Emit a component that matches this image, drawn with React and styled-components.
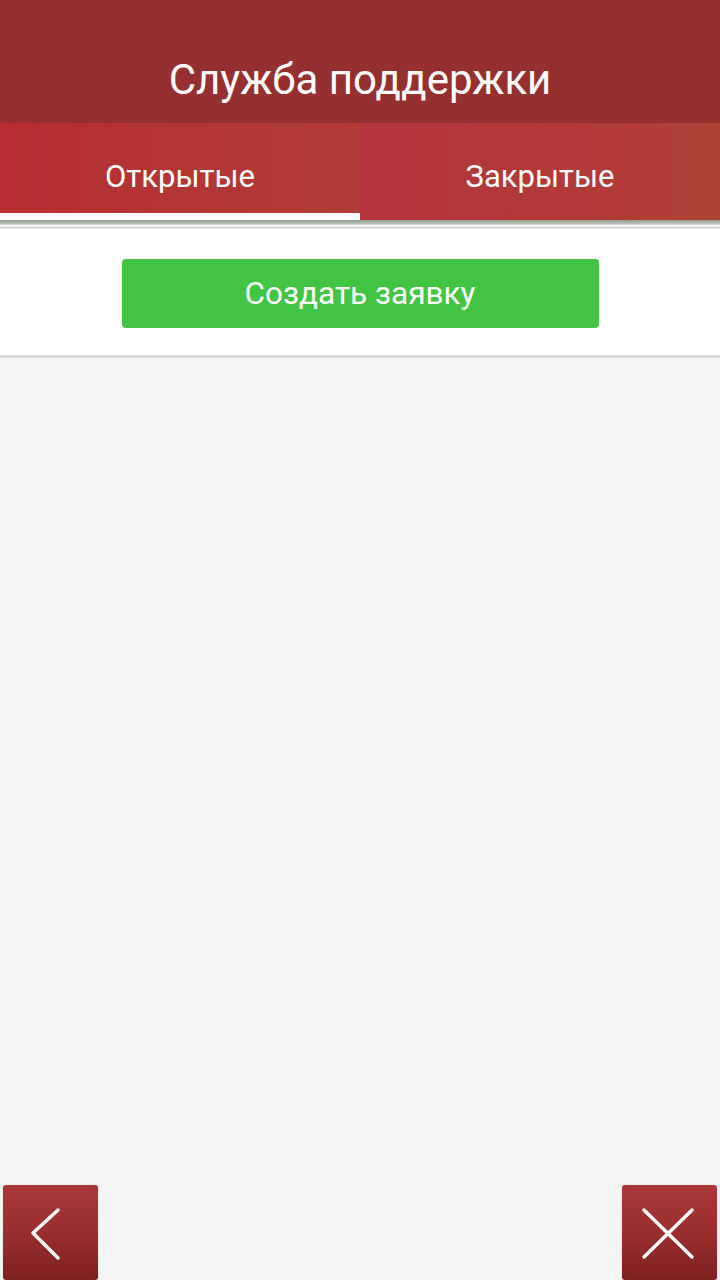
import React from 'react';
import styled, { createGlobalStyle } from 'styled-components';

const GlobalStyle = createGlobalStyle`
  html, body {
    margin: 0;
    padding: 0;
    background: #f4f4f4;
    font-family: Roboto, "Noto Sans", sans-serif;
  }
`;

const Page = styled.div`
  display: flex;
  flex-direction: column;
  min-height: 1280px;
  background: #f4f4f4;
`;

const Header = styled.header`
  height: 123px;
  background: #963030;
  color: #fff;
  display: flex;
  align-items: flex-start;
  justify-content: center;
  font-size: 42px;
  line-height: 1;
  padding-top: 59px;
  box-sizing: border-box;
`;

const Tabs = styled.nav`
  display: flex;
  height: 97px;
`;

const Tab = styled.div`
  flex: 1;
  display: flex;
  align-items: center;
  justify-content: center;
  color: #fff;
  font-size: 31px;
  box-sizing: border-box;
  padding-top: 16px;
  background: ${p => (p.$active
    ? 'linear-gradient(90deg, #b82d31 0%, #b23735 60%, #b03c36 100%)'
    : 'linear-gradient(90deg, #b3363a 0%, #b23a37 70%, #ae4236 100%)')};
  border-bottom: 7px solid ${p => (p.$active ? '#ffffff' : 'transparent')};
`;

const TabShadow = styled.div`
  height: 10px;
  background: linear-gradient(#8f9c8e 0%, #b9c1b8 35%, #f2f2f2 55%, #f2f2f2 65%, #cfcfcf 72%, #d6d6d6 80%, #ffffff 92%);
`;

const Card = styled.section`
  background: #fff;
  height: 128px;
  display: flex;
  align-items: flex-start;
  justify-content: center;
  padding-top: 29px;
  box-sizing: border-box;
  border-bottom: 3px solid #d9d9d9;
`;

const CreateButton = styled.button`
  width: 477px;
  height: 69px;
  border: none;
  border-radius: 4px;
  background: #42c544;
  color: #fff;
  font-family: Roboto, "Noto Sans", sans-serif;
  font-size: 31.5px;
  cursor: pointer;
`;

const Spacer = styled.div`
  flex: 1;
`;

const Footer = styled.footer`
  display: flex;
  justify-content: space-between;
  padding: 0 3px;
  height: 96px;
  align-items: flex-end;
`;

const NavButton = styled.button`
  width: 95px;
  height: 95px;
  border: none;
  border-radius: 3px;
  background: linear-gradient(#ab3838 0%, #9a2e2e 50%, #7e2020 100%);
  box-shadow: 0 0 1px rgba(0, 0, 0, 0.4);
  display: flex;
  align-items: center;
  justify-content: center;
  padding: 0;
  cursor: pointer;
`;

function App() {
  return (
    <Page>
      <GlobalStyle />
      <Header>Служба поддержки</Header>
      <Tabs>
        <Tab $active>Открытые</Tab>
        <Tab>Закрытые</Tab>
      </Tabs>
      <TabShadow />
      <Card>
        <CreateButton>Создать заявку</CreateButton>
      </Card>
      <Spacer />
      <Footer>
        <NavButton aria-label="Назад">
          <svg width="95" height="95" viewBox="0 0 95 95">
            <path d="M55 25 L30 48 L55 73" fill="none" stroke="#fff" strokeWidth="3.5" strokeLinecap="round" strokeLinejoin="round" />
          </svg>
        </NavButton>
        <NavButton aria-label="Закрыть">
          <svg width="95" height="95" viewBox="0 0 95 95">
            <path d="M22 25 L70 72 M70 25 L22 72" fill="none" stroke="#fff" strokeWidth="3.5" strokeLinecap="round" />
          </svg>
        </NavButton>
      </Footer>
    </Page>
  );
}

export default App;
